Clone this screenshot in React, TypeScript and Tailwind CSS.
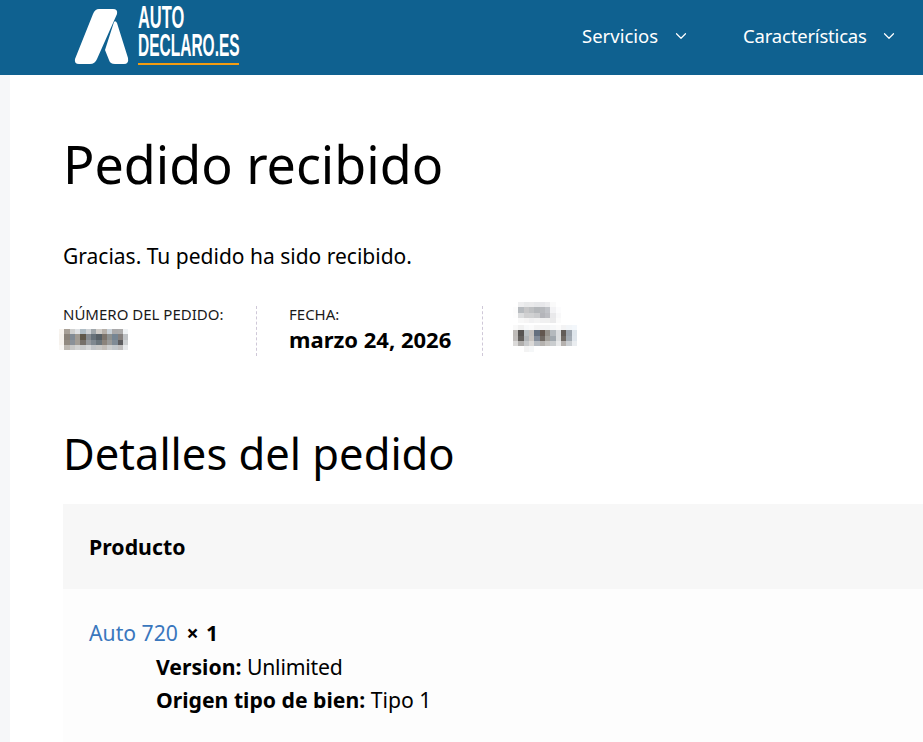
import React from "react";
import { ChevronDown } from "lucide-react";

const font = { fontFamily: '"Noto Sans", sans-serif' };

function Mosaic({ rows, cell, cols }: { rows: string[][]; cell: number; cols: number }) {
  return (
    <svg width={cols * cell} height={rows.length * cell} shapeRendering="crispEdges" className="block">
      {rows.map((r, y) => r.map((c, x) => <rect key={`${x}-${y}`} x={x * cell} y={y * cell} width={cell} height={cell} fill={c} />))}
    </svg>
  );
}

const orderRows = [
  ["#f8f4ef", "#a8a097", "#cfd0cf", "#dfe2e5", "#b0bdc5", "#d0d4d7", "#a0a7ab", "#d0cdc9", "#b6b0a9", "#cad2d9", "#aaa9aa", "#acabab", "#f0f3f5"],
  ["#f5f1ec", "#8b837a", "#818b95", "#a09b93", "#5f584b", "#858b90", "#667179", "#565f65", "#7c746c", "#8e9190", "#768593", "#847f7d", "#bfc2c5"],
  ["#f6f2ed", "#928a80", "#8a9198", "#a29d95", "#75706a", "#95999d", "#7f888f", "#6b757b", "#8b847c", "#999a99", "#7f8b96", "#5d5d60", "#cdd0d2"],
  ["#faf8f5", "#bdb8b1", "#c8c8c6", "#d2d3d2", "#c8cacb", "#d5d7d8", "#c2c5c7", "#c8c8c6", "#c2beb9", "#cdcfcf", "#c2c7cb", "#c0bfbf", "#e8eaec"],
];

const totalTop = [
  ["#ffffff", "#eeeeef", "#e8e9ea", "#eaeaeb", "#e6e7e9", "#e7e7ea", "#ececee", "#fafafa", "#ffffff", "#ffffff"],
  ["#fcfcfc", "#b7bbbf", "#c7c7c8", "#bec0c2", "#b4b7ba", "#b7b9bd", "#c1c3c8", "#f3f3f5", "#fcfcfd", "#ffffff"],
  ["#fdfdfd", "#dcddde", "#d0d0d1", "#d0d1d2", "#cacbcd", "#b4b5ba", "#bcbdc2", "#e9e9eb", "#f8f8f9", "#ffffff"],
  ["#ffffff", "#f8f8f8", "#f6f5f5", "#f1f1f2", "#f4f4f4", "#f0f0f1", "#f0f0f0", "#ebebec", "#fbfbfb", "#ffffff"],
];

const totalBottom = [
  ["#f9f9f9", "#f1f1f1", "#f8f9fa", "#fbfbfb", "#f5f5f5", "#f5f5f6", "#f4f5f6", "#f7f8f9", "#fbfbfb", "#f3f3f4", "#f2f5f8", "#f3f7fb"],
  ["#bebbb8", "#575452", "#bac0c3", "#c4c0bd", "#646f7e", "#63574f", "#95918b", "#b4b9bd", "#dadcde", "#625c58", "#9da5ae", "#dee5eb"],
  ["#c0bdbb", "#625f5c", "#b1b5b8", "#c8c4c0", "#828b98", "#6f6862", "#a3a09b", "#a1a8ae", "#dbddde", "#6f6964", "#a3abb3", "#e0e6ec"],
  ["#dbdad9", "#b0aeac", "#c7c9cb", "#dbd9d7", "#b7bcc2", "#b5b2af", "#c7c5c2", "#cacdcf", "#e8e9ea", "#b5b1ae", "#cbcfd3", "#eaedf0"],
  ["#ffffff", "#ffffff", "#f3f3f3", "#f5f7f8", "#ffffff", "#ffffff", "#ffffff", "#ffffff", "#ffffff", "#ffffff", "#ffffff", "#ffffff"],
];

function Logo() {
  const word = { fontFamily: '"Liberation Sans", sans-serif' };
  return (
    <div className="flex items-start gap-[8px] pt-[9px] -ml-[1px]">
      <svg width="56" height="56" viewBox="0 0 56 56">
        <path d="M25 0 H39 Q44 0 43 5 L23 50 Q21 55 16 55 H5 Q0 55 1 50 L19 5 Q21 0 25 0 Z" fill="white" />
        <path d="M40 13 Q41.5 11 43 14 L54 49 Q55 55 50 55 H41 Q36 55 35 51 L31 41 Z" fill="white" />
      </svg>
      <div className="flex flex-col items-start -mt-[5px] w-[101px]">
        <span className="block text-[31px] leading-[28px] h-[28px] text-white font-bold scale-x-[0.53] origin-left whitespace-nowrap" style={word}>AUTO</span>
        <span className="block text-[31px] leading-[28px] h-[28px] text-white font-bold scale-x-[0.5] origin-left whitespace-nowrap" style={word}>DECLARO.ES</span>
        <div className="w-[101px] h-[2px] bg-[#f39c12] mt-[3px]" />
      </div>
    </div>
  );
}

export default function App() {
  return (
    <div className="h-[742px] w-[923px] overflow-hidden bg-white flex flex-col" style={font}>
      <header className="h-[75px] shrink-0 bg-[#0f6190] flex items-start pl-[75px]">
        <Logo />
        <nav className="ml-[343px] h-[71px] flex items-center text-white text-[18.5px] whitespace-nowrap">
          <span>Servicios</span>
          <ChevronDown size={18} strokeWidth={1.6} className="ml-[14px]" />
          <span className="ml-[53px] tracking-[-0.2px]">Características</span>
          <ChevronDown size={18} strokeWidth={1.6} className="ml-[13px]" />
        </nav>
      </header>
      <div className="flex flex-1">
        <div className="w-[10px] bg-[#f6f7f9] shrink-0" />
        <main className="pl-[53px] flex-1 text-black">
          <h1 className="text-[52px] leading-[64px] mt-[57px]">Pedido recibido</h1>
          <p className="text-[21px] leading-[30px] mt-[45px]">Gracias. Tu pedido ha sido recibido.</p>
          <ul className="flex mt-[35px] h-[50px]">
            <li className="w-[194px] border-r border-dashed border-[#cfc8d8]">
              <div className="-mt-[4px]">
                <div className="text-[15px] leading-[24px] text-[#1a1a1a]">NÚMERO DEL PEDIDO:</div>
                <div className="-ml-[4px] pt-[3px]"><Mosaic rows={orderRows} cell={5.33} cols={13} /></div>
              </div>
            </li>
            <li className="w-[226px] pl-[32px] border-r border-dashed border-[#cfc8d8]">
              <div className="-mt-[4px]">
                <div className="text-[15px] leading-[24px] text-[#1a1a1a]">FECHA:</div>
                <div className="text-[22px] leading-[26px] font-bold">marzo 24, 2026</div>
              </div>
            </li>
            <li className="pl-[30px]">
              <div className="-mt-[4px]">
                <Mosaic rows={totalTop} cell={5.33} cols={10} />
                <div className="pt-[2px]"><Mosaic rows={totalBottom} cell={5.33} cols={12} /></div>
              </div>
            </li>
          </ul>
          <h2 className="text-[43.5px] leading-[56px] mt-[69px]">Detalles del pedido</h2>
          <div className="mt-[23px] h-[85px] bg-[#f7f7f7] flex items-center pl-[26px] text-[21.3px] font-bold">Producto</div>
          <div className="bg-[#fdfdfd] pl-[26px] pt-[27px] text-[21.2px] leading-[33.5px] h-[160px]">
            <div><a className="text-[#3a77bd]">Auto 720</a> <b className="ml-[3px] tracking-[1px]">× 1</b></div>
            <div className="pl-[67px]"><b>Version:</b> <span className="tracking-[-0.2px]">Unlimited</span></div>
            <div className="pl-[67px]"><b>Origen tipo de bien:</b> Tipo 1</div>
          </div>
        </main>
      </div>
    </div>
  );
}
